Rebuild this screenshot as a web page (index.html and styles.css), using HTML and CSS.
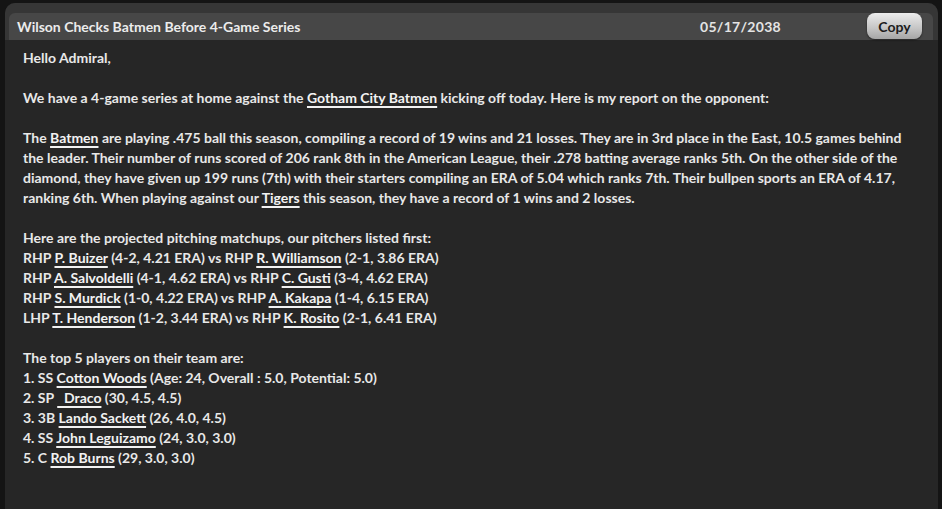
FILE: index.html
```html
<!DOCTYPE html>
<html lang="en">

<head>
  <meta charset="UTF-8">
  <meta name="viewport" content="width=device-width, initial-scale=1.0">
  <title>Wilson Checks Batmen Before 4-Game Series</title>
  <link rel="stylesheet" href="styles.css">
</head>

<body>

  <div class="message-window">
    <div class="message-frame">
      <div class="message-header">
        <span class="message-title">Wilson Checks Batmen Before 4-Game Series</span>
        <span class="message-date">05/17/2038</span>
        <button class="copy-button">Copy</button>
      </div>
    </div>

    <div class="message-body">
      <p>Hello Admiral,</p>

      <p>We have a 4-game series at home against the <a href="#">Gotham City Batmen</a> kicking off today. Here is my report on the opponent:</p>

      <p>The <a href="#">Batmen</a> are playing .475 ball this season, compiling a record of 19 wins and 21 losses. They are in 3rd place in the East, 10.5 games behind the leader. Their number of runs scored of 206 rank 8th in the American League, their .278 batting average ranks 5th. On the other side of the diamond, they have given up 199 runs (7th) with their starters compiling an ERA of 5.04 which ranks 7th. Their bullpen sports an ERA of 4.17, ranking 6th. When playing against our <a href="#">Tigers</a> this season, they have a record of 1 wins and 2 losses.</p>

      <p>Here are the projected pitching matchups, our pitchers listed first:<br>
        RHP <a href="#">P. Buizer</a> (4-2, 4.21 ERA) vs RHP <a href="#">R. Williamson</a> (2-1, 3.86 ERA)<br>
        RHP <a href="#">A. Salvoldelli</a> (4-1, 4.62 ERA) vs RHP <a href="#">C. Gusti</a> (3-4, 4.62 ERA)<br>
        RHP <a href="#">S. Murdick</a> (1-0, 4.22 ERA) vs RHP <a href="#">A. Kakapa</a> (1-4, 6.15 ERA)<br>
        LHP <a href="#">T. Henderson</a> (1-2, 3.44 ERA) vs RHP <a href="#">K. Rosito</a> (2-1, 6.41 ERA)</p>

      <p>The top 5 players on their team are:<br>
        1. SS <a href="#">Cotton Woods</a> (Age: 24, Overall : 5.0, Potential: 5.0)<br>
        2. SP <a href="#">&nbsp;&nbsp;Draco</a> (30, 4.5, 4.5)<br>
        3. 3B <a href="#">Lando Sackett</a> (26, 4.0, 4.5)<br>
        4. SS <a href="#">John Leguizamo</a> (24, 3.0, 3.0)<br>
        5. C <a href="#">Rob Burns</a> (29, 3.0, 3.0)</p>
    </div>
  </div>

</body>

</html>
```
FILE: styles.css
```css
body {
  font-family: 'Lato', 'Open Sans', sans-serif;
  font-weight: 700;
  font-size: 14px;
  margin: 0;
  padding: 0;
  background-color: #141414;
  color: #e8e8e8;
}

.message-window {
  height: calc(100vh - 3px);
  margin: 3px 4px 0 5px;
  display: flex;
  flex-direction: column;
  border-radius: 10px 10px 0 0;
  overflow: hidden;
  background-color: #262626;
}

.message-frame {
  background-color: #363636;
  padding: 10px 5px 0 4px;
}

.message-header {
  display: flex;
  align-items: center;
  height: 27px;
  padding-left: 8px;
  padding-right: 11px;
  background-color: #474747;
  border-radius: 6px 6px 0 0;
}

.message-title {
  flex: 1;
  color: #ececec;
}

.message-date {
  margin-right: 86px;
  color: #e4e4e4;
  letter-spacing: 0.3px;
}

.copy-button {
  width: 55px;
  height: 26px;
  margin-top: -1px;
  padding: 0;
  font-family: inherit;
  font-weight: 700;
  font-size: 14px;
  color: #1c1c1c;
  border: none;
  border-radius: 8px;
  background: linear-gradient(#ececec, #c4c4c4 60%, #a6a6a6);
  box-shadow: 0 1px 2px rgba(0, 0, 0, 0.5);
  cursor: pointer;
}

.message-body {
  flex: 1;
  padding: 8px 21px 0 18px;
  line-height: 20px;
}

.message-body p {
  margin: 0 0 20px 0;
}

.message-body a {
  color: #f2f2f2;
  text-decoration: underline;
  text-decoration-thickness: 1.5px;
  text-underline-offset: 3px;
}
```
